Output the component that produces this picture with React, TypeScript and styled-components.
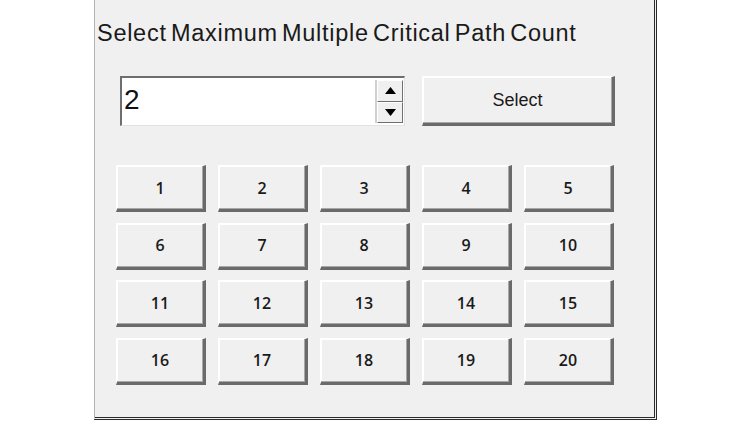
import React from "react";
import styled, { createGlobalStyle } from "styled-components";

const Global = createGlobalStyle`
	body {
		margin: 0;
		background: #ffffff;
	}
`;

//Dialog panel
const Panel = styled.div`
	box-sizing: border-box;
	margin-left: 94px;
	width: 563px;
	height: 420px;
	background-color: #f0f0f0;
	border-left: 1px solid #b4b4b4;
	border-right: 3px double #2a2a2a;
	border-bottom: 3px double #2a2a2a;
	padding: 18px 0 0 2px;
	font-family: "Liberation Sans", Arial, sans-serif;
	color: #1a1a1a;
`;

const Title = styled.div`
	font-size: 23.5px;
	letter-spacing: 0.72px;
	word-spacing: -3px;
	line-height: 30px;
`;

const TopRow = styled.div`
	display: flex;
	align-items: center;
	gap: 17px;
	margin: 28px 0 0 23px;
`;

const Spin = styled.div`
	box-sizing: border-box;
	display: flex;
	width: 285px;
	height: 50px;
	background: #ffffff;
	border-top: 2px solid #6e6e6e;
	border-left: 2px solid #6e6e6e;
	border-right: 1px solid #e2e2e2;
	border-bottom: 1px solid #e2e2e2;
`;

const SpinValue = styled.div`
	flex: 1;
	font-size: 28px;
	line-height: 44px;
	padding-left: 2px;
	color: #111;
`;

const Arrows = styled.div`
	display: flex;
	flex-direction: column;
	width: 26px;
	border-left: 2px solid #d0d0d0;
	margin: 2px 1px 2px 0;
`;

const Arrow = styled.div`
	flex: 1;
	display: flex;
	align-items: center;
	justify-content: center;
	background: #f0f0f0;
	border: 1px solid #ffffff;
	border-right-color: #707070;
	border-bottom-color: #707070;
`;

const Button = styled.button<{ $w: number; $h: number }>`
	box-sizing: border-box;
	width: ${(p) => p.$w}px;
	height: ${(p) => p.$h}px;
	padding: 0;
	background: #f0f0f0;
	border: 1px solid #ffffff;
	border-right: 3px solid #6a6a6a;
	border-bottom: 3px solid #6a6a6a;
	box-shadow: inset -1px -1px 0 #a8a8a8, 1px 1px 0 #ffffff inset;
	font-family: "Open Sans", "DejaVu Sans", sans-serif;
	font-weight: 600;
	font-size: 16px;
	color: #1a1a1a;
`;

const SelectButton = styled(Button)`
	font-family: "Liberation Sans", Arial, sans-serif;
	font-weight: 400;
	font-size: 18px;
`;

const Grid = styled.div`
	display: grid;
	grid-template-columns: repeat(5, 90px);
	grid-auto-rows: 47px;
	column-gap: 12px;
	row-gap: 10.5px;
	margin: 39px 0 0 19px;
`;

function Triangle({ down }: { down?: boolean }) {
	return (
		<svg width="11" height="7" viewBox="0 0 11 7">
			<polygon points={down ? "0,0 11,0 5.5,7" : "0,7 11,7 5.5,0"} fill="#000" />
		</svg>
	);
}

export function App() {
	const nums = Array.from({ length: 20 }, (_, i) => i + 1);

	return (
		<>
			<Global />
			<Panel>
				<Title>Select Maximum Multiple Critical Path Count</Title>
				<TopRow>
					<Spin>
						<SpinValue>2</SpinValue>
						<Arrows>
							<Arrow>
								<Triangle />
							</Arrow>
							<Arrow>
								<Triangle down />
							</Arrow>
						</Arrows>
					</Spin>
					<SelectButton $w={193} $h={50}>Select</SelectButton>
				</TopRow>
				<Grid>
					{nums.map((n) => (
						<Button key={n} $w={90} $h={47}>
							{n}
						</Button>
					))}
				</Grid>
			</Panel>
		</>
	);
}

export default App;
